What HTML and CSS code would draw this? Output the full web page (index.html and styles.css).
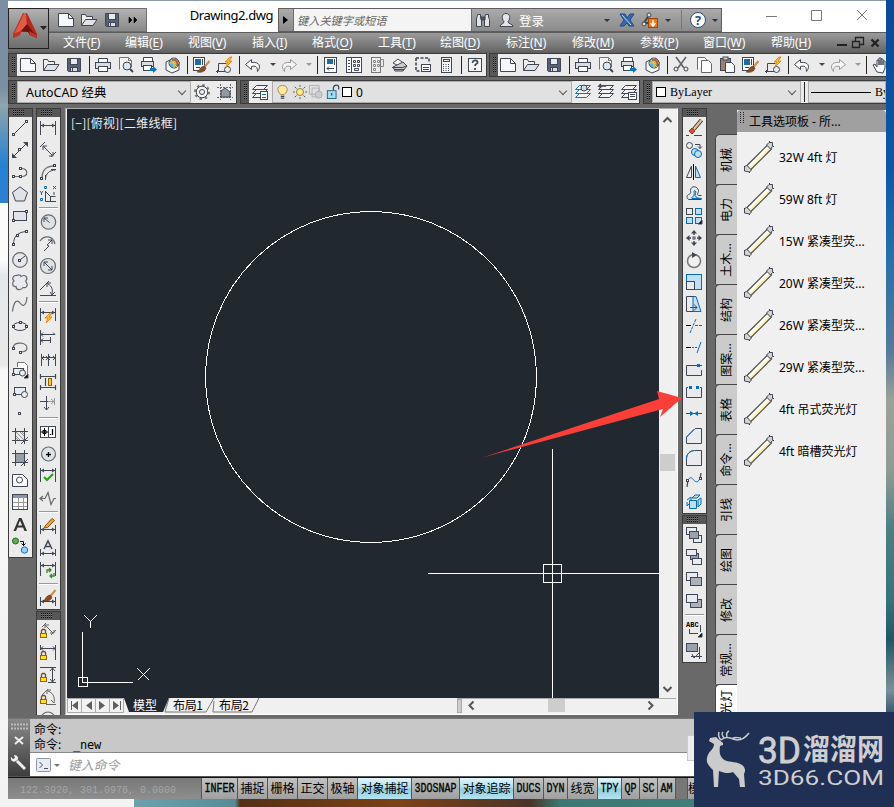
FILE: index.html
```html
<!DOCTYPE html>
<html lang="zh-CN">
<head>
<meta charset="utf-8">
<title>Drawing2.dwg</title>
<link rel="stylesheet" href="styles.css">
</head>
<body>
<div class="desk-left"></div><div class="desk-right"></div><div class="desk-bottom"></div>
<div class="window">
  <header class="header">
    <div class="titlebar">
      <div class="quick" data-icons="new open save more"></div>
      <div class="doc-title">Drawing2.dwg</div>
      <div class="info">
        <span class="info-arrow"></span>
        <div class="search">键入关键字或短语</div>
        <div class="info-tools"><span data-icons="binoc user"></span><span class="login">登录</span><i class="caret c1"></i><span class="xchg" data-icons="xlogo share"></span><i class="caret"></i><i class="line"></i><span class="help">?</span><i class="caret"></i></div>
      </div>
      <div class="controls">
        <svg width="104" height="14" fill="none" stroke="#777"><path d="M0 8.500h11M45.500 2.500h10v10h-10zM91 2l10 10M101 2l-10 10"/></svg>
      </div>
    </div>
    <nav class="menu">
      <span>文件(<u>F</u>)</span><span>编辑(<u>E</u>)</span><span>视图(<u>V</u>)</span><span>插入(<u>I</u>)</span><span>格式(<u>O</u>)</span><span>工具(<u>T</u>)</span><span>绘图(<u>D</u>)</span><span>标注(<u>N</u>)</span><span>修改(<u>M</u>)</span><span>参数(<u>P</u>)</span><span>窗口(<u>W</u>)</span><span>帮助(<u>H</u>)</span>
      <svg class="mdi" width="44" height="14" fill="none" stroke="#222"><path d="M0 9h10" stroke-width="2"/><path d="M15.500 5.500h7v6h-7zM18.500 5v-3.500h8v7h-4" stroke-width="1.300"/><path d="M34.500 3.500l7 7M41.500 3.500l-7 7" stroke-width="2.400"/></svg>
    </nav>
    <div class="app-button">
      <svg width="41" height="41"><path d="M14 4h4l10 21v4l-7-3-2-3h-7l-1 3-7 3v-4z" fill="#b6281f"/><path d="M15 4h2l1 14-9 6-4 1z" fill="#df5b46"/><path d="M18 15l6 8 4 3v3l-7-3-2-3-7-1z" fill="#71130f"/><path d="M4 25l8-3-1 4-7 3zM28 26l-8-4 1 4 7 3z" fill="#c43024"/><path d="M31 17h7l-3.500 4z" fill="#222"/></svg>
    </div>
  </header>

  <div class="toolrow">
    <div class="bar h first"><i class="grip"></i><div data-icons="new open save | print preview plot publish | match block | undo v redo w | props center palettes sheets markup calc | helpq"></div></div>
    <div class="bar h second"><i class="grip"></i><div data-icons="new open save | print preview plot publish | cut copy paste match block | undo v redo w | hand"></div></div>
  </div>
  <div class="toolrow row2">
    <div class="bar h ws"><i class="grip"></i><div class="combo">AutoCAD 经典<b></b></div><div data-icons="gear wsave"></div></div>
    <div class="bar h layers"><i class="grip"></i><div data-icons="layerprops"></div><div class="combo"><span data-icons="bulb sun freeze lock"></span><em></em>0<b></b></div><div data-icons="layers layerprev layerstate"></div></div>
    <div class="bar h bylayer"><i class="grip"></i><div class="combo"><em></em>ByLayer<b></b></div><i class="vline"></i><div class="combo type"><i></i>By</div></div>
  </div>

  <main class="main">
    <div class="dock"><div class="bar v"><i class="grip"></i><div data-icons="line xline pline polygon rect arc circle cloud spline ellipse earc insert mkblock point hatch gradient region table text addsel"></div></div></div>
    <div class="dock">
      <div class="bar v"><i class="grip"></i><div data-icons="dlin dalign darc dord | drad djog ddia dang | dquick dbase dcont dspace dbreak | tol cmark dinsp djogl | dedit dtedit dupd | dstyle"></div></div>
      <div class="bar v"><i class="grip"></i><div data-icons="lalign llin lvert lang lrad"></div></div>
    </div>
    <section class="drawing">
      <svg class="canvas" viewBox="67 109 592 589" width="592" height="589">
        <text x="71" y="128" class="view-label" textLength="106">[−][俯视][二维线框]</text>
        <g fill="none" stroke="#fff" shape-rendering="crispEdges">
          <circle cx="371" cy="377" r="165.500"/>
          <path d="M552.500 449v249M428 573.500h231M543.500 564.500h18v18h-18z"/>
          <path d="M82.500 632v50M82 682.500h51M78.500 677.500h9v9h-9zM84.500 615.500l6 6 6-6M90.500 621v7M137.500 668.500l12 12M149.500 668.500l-12 12"/>
        </g>
      </svg>
      <div class="vscroll"><svg width="16" height="12"><path d="M4.500 8l4-4 4 4"/></svg><i></i><svg width="16" height="12"><path d="M4.500 4l4 4 4-4"/></svg></div>
      <div class="bottom">
        <div class="layouts">
          <svg width="390" height="15"><path d="M.5.500h14v14h-14zM14.500.500h14v14h-14zM28.500.500h14v14h-14zM42.500.500h14v14h-14z" fill="#f2f2f2" stroke="#aaa"/><path d="M11 3v9l-6-4.500zM25 3v9l-6-4.500zM32 3v9l6-4.500zM46 3v9l6-4.500z" fill="#5f5f5f"/><path d="M4.500 3v9M53.500 3v9" stroke="#5f5f5f"/><path d="M57 0h45l-6 14H62z" fill="#212830"/><path d="M102 0l-4 14h41l8-14M147 3l-1 11h39l7-14" fill="none" stroke="#777"/><text x="66" y="12" fill="#fff">模型</text><text x="106" y="12" textLength="30">布局1</text><text x="152" y="12" textLength="30">布局2</text></svg>
        </div>
        <div class="hscroll"><i class="split"></i><svg width="12" height="15"><path d="M8.500 2.500l-4 4 4 4"/></svg><i class="thumb"></i><svg width="12" height="15"><path d="M4.500 2.500l4 4-4 4"/></svg></div>
      </div>
    </section>
    <div class="dock">
      <div class="bar v"><i class="grip"></i><div data-icons="erase mcopy mirror offset array move rotate scale stretch trim extend breakp break join chamfer fillet blend explode"></div></div>
      <div class="bar v"><i class="grip"></i><div data-icons="o1 o2 o3 o4 | abc hback"></div></div>
    </div>
    <aside class="palette">
      <div class="tabs"><span>机械</span><span>电力</span><span>土木...</span><span>结构</span><span>图案...</span><span>表格</span><span>命令...</span><span>引线</span><span>绘图</span><span>修改</span><span>常规...</span><span class="on">光灯</span></div>
      <div class="panel">
        <h2><i></i>工具选项板 - 所...</h2>
        <ul><li>32W 4ft 灯</li><li>59W 8ft 灯</li><li>15W 紧凑型荧...</li><li>20W 紧凑型荧...</li><li>26W 紧凑型荧...</li><li>29W 紧凑型荧...</li><li>4ft 吊式荧光灯</li><li>4ft 暗槽荧光灯</li></ul>
      </div>
    </aside>
  </main>

  <div class="command">
    <div class="cmd-side"><svg width="22" height="58" fill="none" stroke="#eee"><path d="M3 5.500h17M3 9.500h17" stroke="#bbb" stroke-width="2" stroke-dasharray="2 1"/><path d="M7 18l8 7M15 18l-8 7" stroke-width="2"/><path d="M9 42l8 8" stroke-width="3"/><path d="M6 36l1 3-2 1-2-2c-1 3 2 6 5 4 3-1 3-6-2-6z" fill="#eee" stroke="none"/></svg></div>
    <div class="cmd-body">
      <div class="history"><div>命令:</div><div>命令: <code>_new</code></div></div>
      <div class="prompt"><svg width="24" height="16"><rect x=".5" y="1.500" width="14" height="13" rx="1" fill="#e7edf3" stroke="#8c96a3"/><path d="M3.500 5l3 3-3 3M8 11.500h4" fill="none" stroke="#46505e"/><path d="M18 7h6l-3 3z" fill="#777"/></svg><span>键入命令</span></div>
    </div>
  </div>
  <footer class="status">
    <div class="coords">122.3920, 301.0976, 0.0000</div>
    <div class="modes"><span><b>INFER</b></span><span>捕捉</span><span>栅格</span><span>正交</span><span>极轴</span><span class="on">对象捕捉</span><span><b>3DOSNAP</b></span><span class="on">对象追踪</span><span><b>DUCS</b></span><span><b>DYN</b></span><span>线宽</span><span class="on"><b>TPY</b></span><span><b>QP</b></span><span><b>SC</b></span><span><b>AM</b></span><span class="gap"></span><span class="cut">模型</span></div>
  </footer>
</div>
<svg class="pointer" width="204" height="72"><path d="M1.500 69.500L182 21l-3 8 22-19-25-7 2 8z" fill="#fb3e38"/></svg>
<div class="ime"></div>
<div class="watermark">
  <svg width="200" height="95">
    <path d="M15 29l1-3 6-1 2 2 5 4 0 2-3 1c-1 6 0 10 3 13 5 4 14 2 19 6 3 2 4 6 2 9l1 13h-5l-1-8-6-7c-4 2-9 1-14-1l-1 16h-4l-1-17c-4-4-7-7-6-12 1-7 7-8 7-14z" fill="#cbcbcb"/>
    <path d="M27 28c6-5 10-1 16 0 6 0 9-3 12-7M27 28c-3-3-3-5-2-8M30 26c-3-4-2-5-1-6M33 25c-1-3 0-5 2-6M38 27c2-3 5-1 9-1" fill="none" stroke="#cbcbcb" stroke-width="1.500"/>
    <text x="64" y="51" class="wm-num big" font-size="37" textLength="43" lengthAdjust="spacingAndGlyphs">3D</text>
    <text x="109" y="48" font-size="29" font-weight="700" textLength="81" lengthAdjust="spacingAndGlyphs">溜溜网</text>
    <text x="64" y="73" class="wm-num" font-size="20.500" textLength="126" lengthAdjust="spacingAndGlyphs">3D66.COM</text>
  </svg>
</div>
<script src="icons.js"></script>
</body>
</html>
```
FILE: styles.css
```css
* { box-sizing: border-box; }
body { margin: 0; padding: 1px 8px 0; width: 894px; height: 807px; overflow: hidden; position: relative; background: #8b99a8; font: 12px "Noto Sans", "Noto Sans CJK SC", sans-serif; color: #000; }
i, em { font-style: normal; }
svg { display: block; flex: none; }
.desk-left { position: absolute; left: 0; top: 0; width: 8px; height: 807px; background: linear-gradient(#7b8ea3, #7b8ea3 88px, #8fa4ad 105px, #2482d2 165px, #2e7fd2 203px, #fbfbfb 203px, #fbfbfb 260px, #e4e7ea 275px, #e8e8e8 365px, #f8f8f8 370px, #f2f2f2); }
.desk-right { position: absolute; right: 0; top: 0; width: 8px; height: 720px; background: linear-gradient(#084a97, #0c58a6 170px, #2672aa 260px, #527a9a 350px, #9ba198 400px, #8f9b94 470px, #4a7f83 530px, #35747b 600px, #205767 640px, #789098 690px, #1c4967); }
.desk-bottom { position: absolute; left: 0; bottom: 0; width: 894px; height: 8px; background: linear-gradient(90deg, #f3f3f3 134px, #6ba1ad 134px, #558c97 235px, #553015 240px, #7d4117 400px, #4b3428 530px, #3d7773 560px, #478783); }
.window { position: relative; width: 878px; height: 798px; overflow: hidden; background: #696969; }

.header { position: relative; height: 52px; }
.titlebar { height: 31px; padding: 7px 0 0 41px; background: #fff; display: flex; }
.quick { width: 98px; height: 24px; padding: 0 0 0 6px; display: flex; align-items: center; background: linear-gradient(#b2b2b2, #8a8a8a); border: 1px solid #707070; border-left: 0; }
.doc-title { width: 131px; padding-right: 5px; text-align: right; font-size: 13px; line-height: 15px; letter-spacing: -.45px; }
.info { width: 444px; height: 24px; display: flex; background: linear-gradient(#aaa, #8b8b8b); border: 1px solid #5e5e5e; }
.info-arrow { flex: none; width: 14px; padding: 7px 0 0 4px; }
.info-arrow::before { content: ""; display: block; width: 5px; border: 4px solid transparent; border-left: 5px solid #000; border-right: 0; }
.search { flex: none; width: 179px; background: #f4f4f4; border: 1px solid #6d6d6d; border-width: 0 1px; padding-left: 3px; line-height: 23px; font-size: 11.2px; font-style: italic; color: #666; }
.info-tools { flex: 1; min-width: 0; display: flex; align-items: center; color: #fff; }
.info-tools [data-icons] { display: flex; }
.login { flex: none; width: 26px; white-space: nowrap; margin-left: 1px; font-size: 12.5px; }
.caret { flex: none; border: 3px solid transparent; border-top: 3px solid #333; border-bottom: 0; margin: 0 3px; }
.c1 { margin-left: 59px; }
.xchg { margin-left: 3px; }
.line { flex: none; width: 1px; height: 20px; background: #777; margin: 0 8px 0 7px; }
.help { flex: none; width: 16px; height: 16px; border-radius: 8px; background: #fff; border: 1px solid #334b78; color: #244b91; text-align: center; font: bold 13px/14px "Open Sans"; margin-right: 3px; }
.controls { flex: 1; padding: 0 0 0 44px; }
.menu { height: 21px; padding-left: 55px; display: grid; grid-template-columns: 62px 63px 64px 60px 66px 62px 66px 66px 68px 63px 68px 66px 1fr; align-items: center; background: linear-gradient(#9b9b9b, #6b6b6b 85%, #5e5e5e); border-top: 1px solid #5b5b5b; color: #fff; line-height: 20px; white-space: nowrap; }
.menu u { text-underline-offset: 2px; }
.app-button { position: absolute; left: 0; top: 7px; width: 41px; height: 41px; background: linear-gradient(#b1b1b1, #6e6e6e); border: 1px solid #222; }

.toolrow { height: 26px; display: flex; gap: 2px; background: #696969; }
.row2 { padding-top: 1px; gap: 3px; }
.bar { background: #ebebeb; border: 1px solid #3b3b3b; overflow: hidden; }
.bar.h { height: 24px; display: flex; }
.bar.h > div[data-icons] { display: flex; align-items: center; }
.grip { flex: none; position: relative; background: #575757; }
.grip::before { content: ""; display: block; background: repeating-linear-gradient(90deg, #575757 0 1px, transparent 1px 2px), repeating-linear-gradient(#111 0 1px, #777 1px 2px); }
.bar.h > .grip { width: 8px; padding: 3px 1px 0 2px; }
.bar.h > .grip::before { width: 5px; height: 15px; }
.bar.v > .grip { display: block; height: 8px; padding: 1px 0 0 3px; }
.bar.v > .grip::before { width: 13px; height: 5px; }
.slot { flex: none; display: flex; align-items: center; width: 23px; height: 22px; padding-left: 3px; }
.slot svg { width: 16px; height: 16px; overflow: visible; fill: none; stroke: #3f4754; }
.slot.drop { width: 13px; padding-left: 0; }
.sep { flex: none; width: 6px; height: 18px; border-right: 1px solid #252525; margin: 0 2px 0 -2px; }
.bar.v .slot { width: 23px; }
.bar.v .sep { display: block; width: 19px; height: 6px; border: 0; margin: 0 0 0 2px; background: linear-gradient(transparent 2px, #999 2px 3px, #fff 3px 4px, transparent 4px); }
.first { width: 479px; } .second { flex: 1; border-right: 0; }
.second > div[data-icons] { margin-left: -1px; }
.ws { width: 229px; } .layers { width: 400px; } .bylayer { flex: 1; border-right: 0; }
.combo { background: #e1e1e1; border: 1px solid #adadad; display: flex; align-items: center; padding-left: 8px; white-space: nowrap; flex: none; }
.combo b { margin: 0 5px 3px auto; width: 6px; height: 6px; border: solid #555; border-width: 0 1px 1px 0; transform: rotate(45deg); }
.combo em { width: 10px; height: 10px; border: 1px solid #000; background: #fff; margin-right: 4px; }
.ws .combo { width: 174px; font-size: 12.400px; }
.layers .combo { width: 300px; padding-left: 2px; }
.layers .combo span { display: flex; margin-right: 0; }
.layers .combo .slot { width: 16px; padding-left: 1px; margin-right: .5px; }
.layers .combo .slot svg { width: 14px; height: 14px; }
.layers .combo span + em { margin-left: 1px; }
.bylayer .combo { width: 149px; padding-left: 3px; font: 12px "Liberation Serif", serif; }
.vline { width: 1px; background: #222; margin: 1px 3px; }
.bylayer .type { flex: 1; min-width: 0; padding-left: 2px; overflow: hidden; }
.type i { width: 60px; height: 1px; background: #000; margin-right: 4px; flex: none; }

.main { height: 613px; padding-top: 3px; display: grid; grid-template-columns: 28px 29px 617px 33px 171px; background: #696969; }
.dock { width: 25px; height: 607px; display: flex; flex-direction: column; overflow: hidden; gap: 1px; }
.dock .bar { flex: none; }
.drawing { width: 613px; height: 607px; padding: 0 1px 0 1px; border: 1px solid #aaa; border-right-color: #fff; border-bottom-color: #fff; background: #f0f0f0; display: grid; grid-template: 589px 16px / 592px 17px; }
.canvas { background: #212830; }
.view-label { fill: #eee; font: 12px "Noto Sans CJK SC"; }
.vscroll, .hscroll { display: flex; background: #f0f0f0; }
.vscroll { flex-direction: column; padding: 5px 0 3px; }
.vscroll path, .hscroll path { fill: none; stroke: #555; stroke-width: 2; }
.vscroll i { height: 17px; width: 15px; background: #cdcdcd; margin: 328px 0 auto 1px; }
.bottom { grid-column: 1 / 3; display: flex; }
.layouts text { font: 12px "Noto Sans CJK SC"; }
.layouts { width: 390px; }
.hscroll { flex: 1; border-top: 1px solid #aaa; }
.split { width: 5px; height: 14px; background: #ccc; border: 1px solid #aaa; margin-right: 3px; }
.thumb { width: 17px; height: 13px; background: #cdcdcd; margin: 0 79px 0 71px; }

.palette { display: grid; grid-template-columns: 22px 149px; padding-top: 2px; height: 610px; overflow: hidden; }
.tabs { padding-top: 24px; }
.tabs span { display: block; width: 22px; height: 50px; border: 1px solid #444; border-width: 1px 0 0 1px; border-radius: 5px 0 0 0; background: #cbcbcb; writing-mode: sideways-lr; text-align: center; line-height: 21px; font-size: 12px; white-space: nowrap; }
.tabs .on { background: #fff; height: 31px; text-align: right; padding-top: 5px; overflow: visible; }
.panel { background: #f0f0f0; }
.panel h2 { margin: 0; height: 22px; padding-left: 3px; display: flex; align-items: center; font-size: 12px; font-weight: 400; background: #a0a0a0; border-radius: 4px 4px 0 0; }
.panel h2 i { width: 4px; height: 12px; margin: -6px 5px 0 0; background: repeating-linear-gradient(90deg, transparent 0 1px, #a0a0a0 1px 3px), repeating-linear-gradient(#222 0 1px, #a0a0a0 1px 2px); }
.panel ul { list-style: none; margin: 0; padding: 4px 0 0 7px; }
.panel li { height: 42px; display: flex; align-items: center; gap: 5px; white-space: nowrap; }

.command { height: 59px; border-top: 1px solid #777; border-bottom: 1px solid #555; display: flex; }
.cmd-side { width: 22px; background: linear-gradient(#898989, #3d3d3d); }
.cmd-body { flex: 1; }
.history { height: 34px; padding: 2px 0 0 4px; background: #c8c8c8; border-bottom: 1px solid #888; line-height: 15px; font-family: "Noto Sans CJK SC"; }
.history div { height: 15px; }
.history code { font: 12px/12px "DejaVu Sans Mono"; letter-spacing: -.2px; margin-left: 9px; }
.prompt { height: 23px; background: #fff; display: flex; align-items: center; padding-left: 6px; gap: 8px; color: #999; font-style: italic; font-size: 12.800px; }
.status { height: 22px; display: flex; background: #777; border-top: 1px solid #111; }
.coords { width: 193px; padding: 2px 0 0 12px; background: linear-gradient(#777, #8e8e8e); color: #a5a5a5; font: 10px/21px "Liberation Mono"; white-space: pre; }
.modes { display: grid; grid-template-columns: 36px 30px 30px 30px 30px 54px 48px 54px 30px 24px 30px 24px 18px 18px 18px 12px 60px; }
.modes span { border-left: 1px solid #555; line-height: 22px; text-align: center; white-space: nowrap; overflow: hidden; background: linear-gradient(#c3c3c3, #9f9f9f); font-size: 12px; letter-spacing: -.1px; }
.modes .on { background: linear-gradient(#e2f6fb, #a7dcea 48%, #8fcbdc 52%, #b6e3ef); }
.modes b { display: block; font: 400 10px/22px "Liberation Mono"; letter-spacing: 0; margin: 0 -3px; transform: scaleY(1.25); -webkit-text-stroke: .25px #000; }
.modes .gap { background: #777; }
.modes .cut { text-align: left; }

.pointer { position: absolute; left: 481px; top: 388px; }
.ime { position: absolute; left: 687px; top: 735px; width: 20px; height: 26px; background: #eee; border: 1px solid #ccc; }
.watermark { position: absolute; left: 694px; top: 712px; width: 200px; height: 95px; background: #203055; }
.watermark text { fill: #cfcfcf; font-family: "Noto Sans CJK SC"; }
.watermark .wm-num { font-family: Roboto, sans-serif; }
.watermark .big { stroke: #cfcfcf; stroke-width: .8; }
```
FILE: icons.js
```js
// Toolbar glyphs on a 16 x 16 grid; strokes inherit the slot colour.
const p = (d, a = '') => `<path d="${d}" ${a}/>`;
const n = (...c) => { let s = ''; for (let k = 0; k < c.length; k += 2) s += `<rect x="${c[k] - 1}" y="${c[k + 1] - 1}" width="2" height="2" fill="#fff"/>`; return s; };
const r = (x, y, w, h, f = '#e8ebf0', a = '') => `<rect x="${x}" y="${y}" width="${w}" height="${h}" fill="${f}" ${a}/>`;
const c = (x, y, q, f = 'none', a = '') => `<circle cx="${x}" cy="${y}" r="${q}" fill="${f}" ${a}/>`;
const blue = 'stroke="#0869bd"', lb = '#bfe0f2', dark = 'fill="#3f4754" stroke="none"', grey = 'stroke="#666b70" stroke-width="1.2"';
// Horizontal dimension: line at y, extension lines from a to b.
const dim = (y, a, b) => p(`M.5 ${a}V${b}M15.500 ${a}V${b}M1 ${y}h14`) + p(`M4 ${y - 2}l-3 2 3 2zM12 ${y - 2}l3 2-3 2z`, dark);
const dimLow = () => dim(11.5, 7, 16);
const lock = r(.5, 10.500, 6, 4, '#ffe11c', 'stroke="#9a6200"') + p('M1.500 10V7.500l1-1h2l1 1V10', 'stroke="#784b20" stroke-width="1.300"');
const paper = p('M.5 1.500h10l5 5v8H.5z', 'fill="#f6f7f9"') + p('M10.500 1.500v5h5');
const printer = p('M3.500 6V1.500h9V6', 'fill="#fff"') + r(.5, 5.5, 15, 6, '#d9dce1') + r(3.500, 9.500, 9, 5, '#fff');
const stack = (k = '#3f4754') => [4, 8, 12].map(y => p(`M4.500 ${y - 2.5}h11l-4 4h-11z`, `fill="#f4f4f4" stroke="${k}"`)).join('');
const flash = (x, y) => `<path d="M${x + 5} ${y}l-5 5h3l-2 5 6-6h-3l3-4z" fill="#ffc01a" stroke="#e07b00" stroke-width=".8"/>`;
const brush = p('M15.500 0l-5 6', 'stroke="#c98d4c" stroke-width="2"') + p('M10 5l2 2c-1 4-5 5-9 4 3-1 2-5 7-6z', 'fill="#8b4d22" stroke="#4e2d18" stroke-width=".5"');
const crop = p('M3.500 0v16M0 3.500h16M12.500 0v16M0 12.500h16');
const I = {
  new: paper,
  open: p('M.5 13.500v-11h4l1 2h6v3', 'fill="#eee"') + p('M.5 13.500l4-6h11.500l-4 6z', 'fill="#dfe3e8"'),
  save: p('M1.500 1.500h13v13h-12l-1-1z', 'fill="#596177"') + r(4.500, 1.500, 7, 6, '#e8ebee') + r(4.500, 10.500, 7, 4, '#ddd') + p('M6.500 11v3'),
  more: p('M2 5v6l3-3zM7 5v6l3-3z', 'fill="#000" stroke="#000" stroke-width=".6"'),
  binoc: p('M2.500 2.500h3v3l1 2v7h-5V7zM10.500 2.500h3v3l1 2v7h-5V7z', 'fill="#e3e3e3"') + p('M6 5h4v3H6z', 'fill="#555"'),
  user: p('M2 14.500c0-3 4-2 4-5-3-3-2-8 2-8s5 5 2 8c0 3 5 2 5 5z', 'fill="#e6e6e6"'),
  xlogo: p('M1 2h5l2 4 3-4h4l-4 6 4 6h-5l-2-3-3 3H1l4-6z', 'fill="#3668ad" stroke="#204b8c"') + p('M3 3l9 10', 'stroke="#b9d4f2"'),
  share: p('M7 3L2 11h7', 'stroke-width="2"') + c(7, 3, 2, '#ddd') + c(2, 12, 2, '#ddd') + r(6.500, 6.500, 9, 9, '#ee7619', 'stroke="#a34500"') + p('M11 8v5M8.5 11l2.500 3 2.500-3', 'stroke="#fff" stroke-width="1.500"'),
  print: printer,
  preview: p('M1.500 12.500v-12h9l3 3v7M10.500.5v3h3', 'fill="#f8f8f8" stroke="#777"') + c(9, 9, 4, '#d5e9f3') + p('M12 12l3 3', 'stroke-width="2"'),
  plot: p('M2.500 5V.5h9V5', 'fill="#fff"') + r(.5, 4.500, 12, 5, '#d9dce1') + r(2.500, 8.500, 8, 5, '#fff') + p('M9 11h3V9l4 3.500-4 3.500v-2H9z', 'fill="#0872c6" stroke="none"'),
  publish: p('M2 5l6-3 7 3v8l-7 3-6-3z', 'fill="#f4f4f4"') + c(10, 6, 5, '#58b9cf') + p('M10 1v10M5 6h10M7 3l6 7', 'stroke="#ffc52b"') + p('M8 3c5-1 6 3 5 6', 'stroke="#dc4027" stroke-width="1.500"'),
  match: r(.5, .5, 11, 13, '#fff') + r(2, 2, 6, 6, '#1b6daa', 'stroke="none"') + p('M3 10.500h4M9.500 2v6') + `<g transform="translate(1 4)">${brush}</g>`,
  block: p('M10.500 6.500h-8v8M0 14.500h9M1.500 13v3') + c(11.500, 12.500, 3, '#eee') + flash(9, 0),
  undo: p('M6.500 2.500l-6 5 6 5v-3c4-1 6 0 6 5 4-5 2-10-6-9z', 'fill="#fafafa"'),
  redo: p('M9.500 2.500l6 5-6 5v-3c-4-1-6 0-6 5-4-5-2-10 6-9z', 'stroke="#999" fill="#f5f5f5"'),
  v: p('M5 6h6l-3 3z', dark), w: p('M5 6h6l-3 3z', 'fill="#999" stroke="none"'),
  props: r(1.500, .5, 12, 15, '#fff') + r(4, 2, 6, 5, '#1b6daa', 'stroke="none"') + p('M4 11.5h7M4 11.5l2-2M4 11.5l2 2M11.500 2v6'),
  center: r(.5, .5, 15, 15, '#fff') + p('M5.500 1v14M2 3.500h2M2 6.500h2M2 9.500h2M2 12.500h2M7.500 3.500h2v2h-2zM11.500 3.500h2v2h-2zM7.500 7.500h2v2h-2zM11.500 7.500h2v2h-2zM8.500 11.5h4v2h-4z'),
  palettes: r(2.500, .5, 9, 15, '#eee', 'stroke="#777"') + p('M11.500 2.500h3v7h-3M4.500 3.500h2v2h-2zM8.500 3.500h2v2h-2zM4.500 7.500h2v2h-2zM8.500 7.500h2v2h-2zM4.500 11.500h2v2h-2z', 'stroke="#888"'),
  sheets: p('M1 6l5-4 8 6-3 3z', 'fill="#fff"') + p('M1 10l10-5 4 4-4 5H3z', 'fill="#ccc"') + p('M0 10.500h11l4-2M2 12.500h10'),
  markup: p('M1 1h13v5M1 1v13h5', 'stroke-width="1.600" stroke-dasharray="3 1.500"') + r(6.500, 7.500, 9, 7, '#fff') + p('M8 10.500h6M8 12.500h6'),
  calc: r(3.500, .5, 10, 15, '#f6f6f6') + r(5.500, 2.500, 6, 2) + [7.5, 9.5, 11.5, 13.5].map(y => p(`M5 ${y}h7`, 'stroke-dasharray="1 1.500"')).join(''),
  helpq: r(1.500, 1.500, 13, 13, '#f7f7f7') + p('M5.500 6c0-4 6-3 5 0-1 1-2.500 1-2.500 3M8 11v2', 'stroke-width="1.700"'),
  cut: p('M3 0l8 11M13 0L5 11', 'stroke-width="1.600" stroke="#666"') + c(3, 12, 2) + c(13, 12, 2),
  copy: p('M1.500 12.500v-12h7l3 3M5.500 3.500h7l3 3v9h-10z', 'fill="#fff" stroke="#666"'),
  paste: r(1.500, 1.500, 10, 12, '#a08068') + r(4, 0, 5, 3, '#ccc') + p('M6.500 5.500h6l3 3v7h-9z', 'fill="#fff"'),
  hand: p('M5 15L1 8l2-1 2 3V3h2v5-7h2v7-6h2v6-4h2v7l-2 5z', 'fill="#fff"'),
  gear: c(8, 8, 7, 'none', 'stroke-width="2" stroke="#777" stroke-dasharray="2.500 3"') + c(8, 8, 5.800, '#f4f4f4') + c(8, 8, 2.500),
  wsave: p('M0 3.500h16M0 13.500h16M3.500 0v16M13.500 0v16', 'stroke-dasharray="2 1" stroke="#666"') + p('M4 13V7l4-3 5 4v5z', 'fill="#929aa5"'),
  layerprops: stack() + r(8.500, 7.500, 7, 8, '#fff') + p('M10 10.500h4M10 13.5h4', blue),
  bulb: p('M5.500 11c-6-6-3-10.500 2-10.500s8 5 2 10.500z', 'fill="#ffe9a0" stroke="#9c8240"') + p('M5.500 13h4M5.500 15h4', 'stroke-width="1.300"'),
  sun: c(8, 8, 4, '#ffe78a', 'stroke="#8b7130"') + p('M8 0v2M8 14v2M0 8h2M14 8h2M2 2l2 2M12 12l2 2M14 2l-2 2M4 12l-2 2'),
  freeze: p('M.5.500h11v10H.5zM3.500 3.500h8v10h-8z', 'stroke="#aaa"') + c(11, 11, 4, '#ccc', 'stroke="#aaa"'),
  lock: r(1.500, 6.500, 10, 9, '#a5def2', 'stroke="#165f82"') + p('M8.500 6V2.500c1-3 6-3 6 0V5M6.500 9v3', 'stroke-width="1.400"'),
  layers: stack('#1670b9') + c(9, 4, 3, '#c7dbea'), layerprev: stack() + p('M8 2H1l2-2M1 2l2 2', 'stroke-width="1.500"'),
  layerstate: stack() + r(7.500, 8.500, 8, 7, '#fff') + p('M9 10.500h5M9 12.500h5'),
  line: p('M1 15L15 1') + n(1.500, 14.500, 14.500, 1.500),
  xline: p('M1 15L15 1') + p('M0 11v5h5zM11 0h5v5z', dark) + n(7.500, 7.500),
  pline: p('M1.500 12.500h8c7 0 7-8 0-8', grey) + n(1.500, 12.500, 8.500, 12.500, 8.500, 4.500),
  polygon: p('M8 .8l7.500 5.700-3 8.500h-9L.5 6.500z', 'fill="#dfe2e7"'),
  rect: r(1.500, 3.500, 13, 9, '#dfe2e7') + n(1.500, 12.500, 14.500, 3.500), arc: p('M1.500 14.500C1.500 6 6 2 14.500 1.500') + n(1.500, 14.500, 5.500, 5.500, 14.500, 1.500),
  circle: c(8, 8, 7.300, '#e5e7ea', grey) + p('M8 8l5-4') + n(7.500, 8.500),
  cloud: p('M5 1.500c3-2 4 1 4 1 5-3 7 2 5 4-1 1 0 1 1 3s-1 5-4 4c-2 3-7 3-7-1C0 13 0 8 2 7-1 4 2 1 5 1.500z', 'fill="#e8eaed" ' + grey), spline: p('M.5 15.500C2 3 6 4 8 7s6 5 7-6', grey),
  ellipse: `<ellipse cx="8" cy="8.500" rx="7" ry="4"/>` + n(1.500, 8.500, 14.500, 8.500, 8.500, 4.500), earc: p('M1 8c1-7 14-6 14 0 0 3-4 4-7 4', grey) + n(1.500, 8.500, 8.500, 12.500),
  insert: p('M5.500 5V.500h7l3 3V12', 'fill="#fff" stroke="#777"') + r(1.500, 6.500, 10, 6) + c(10.5, 11, 3, '#eee') + p('M16 12v4h-4z', 'fill="#000"') + n(1.500, 12.500),
  mkblock: r(2.500, 3.500, 11, 7) + c(12.5, 10.5, 3, '#eee') + n(2.500, 10.500), point: n(7.500, 7.500),
  hatch: crop + p('M4 4l8 8M4 8l4 4M8 4l4 4M4 10l2 2M10 4l2 2', 'stroke="#777" stroke-width=".8"') + p('M16 9l-7 7', 'stroke="#555"'), gradient: crop + r(4, 4, 8, 8, '#989da5', 'stroke="none"') + p('M16 9l-7 7'),
  region: p('M.5 2.500h10l5 5v7H.5z', 'fill="#fff"') + c(7.500, 8, 3), table: r(.5, .5, 15, 15, '#fff') + r(1, 1, 14, 3, '#8796aa', 'stroke="none"') + p('M1 8.500h14M1 12.500h14M6.500 4v11M11.500 4v11', 'stroke="#999"'),
  text: p('M1.500 15L7 2h2.500L15 15h-2.500l-1.500-3.500H5.500L4 15zM6 9.500h4.200L8 4.500z', 'fill="#333" stroke="none" fill-rule="evenodd"'),
  addsel: c(3.500, 3, 3, '#69a95f', 'stroke="#216c22"') + c(12.500, 12, 3.200, '#96d1f3', 'stroke="#1376b7"') + p('M8 3.500h3.500v4M9.500 5.500l2 2 2-2', 'stroke="#000"'),
  dlin: dim(5.5, 1, 15), dalign: p('M3 4l10 10M0 5l5-5M11 15l5-5M3 8V4h4M9 14h4v-4'), darc: p('M2 14C2 6 7 2 14 2', 'stroke="#777" stroke-width="1.500"') + p('M5.5 15c0-5 4-9 10-9M5.500 11v5M11 5.500h5') + n(1.500, 14.500, 14.500, 1.500),
  dord: p('M5.500 5v10.500H16M5.500 5.500l5 5h5M10.500 10v6M14 6v3') + p('M0 5l1.500 2L3 5M1.500 7v2M.5 12.500h2v2h-2zM4.500.5h2v2h-2zM13 0l3 3M16 0l-3 3', blue),
  drad: c(8.500, 8, 7.200, '#dfe2e4', grey) + p('M9.500 8.500L4 4M4 8V4h4'), djog: p('M0 5C4-1 13-1 15 8', grey) + p('M4 15l5-5-2-1 5-5M8 4h4v4'), ddia: c(8, 8, 7.500, '#dfe2e4', grey) + p('M4 4l8 8M4 8V4h4M8 12h4V8'), dang: p('M0 15.500h16M0 10l9-9M8 4c4 2 5 6 4 10M7 7V3h4M10 12l2 3 3-3'),
  dquick: dim(4.5, 0, 13) + flash(5, 5), dbase: p('M.5 0v15M1 4.500h14M1 10.500h10M10.500 7v6M3 2.500l-2 2 2 2M3 8.500l-2 2 2 2M13 2.500l2 2'), dcont: p('M1.500 2v12M8.500 2v12M15.500 2v12M2 5.500h13M4 4l-2 2 2 2M10 4l-2 2 2 2M6 4l2 2-2 2M13 4l2 2-2 2'),
  dspace: p('M0 2.500h16M0 13.500h16M.5 0v5M15.500 0v5M.5 11v5M15.500 11v5M5.500 4v8', 'stroke-width="1.200"') + r(8.500, 4.500, 3, 7, '#ffc928', 'stroke="#936000"'), dbreak: p('M6.500 0v14M4 11l2.500 3 2.500-3M0 5.500h8') + p('M14.500 2v7M8 5.500h6M11 3l3 2.500L11 8', 'stroke="#999"'),
  tol: r(.5, 2.500, 15, 11, '#fff') + p('M8.500 3v10') + p('M4.500 4v8M1 8h7M3 6.500h3v3H3z', 'stroke="#000"') + p('M10.500 10v1M12.500 5v6', 'stroke="#000" stroke-width="1.300"'), cmark: c(8.500, 8, 7, '#dfe2e4', grey) + p('M6 8.500h5M8.500 6v5', 'stroke="#000" stroke-width="1.300"'),
  dinsp: dim(2.5, 0, 14) + p('M4 9l3 3 6-6', 'stroke="#25a617" stroke-width="2.200"'), djogl: p('M0 8.500h5l3-6 3 12 3-6h2M3 6L0 8.500 3 11', grey),
  dedit: dimLow() + p('M5 8l7-7.500 2.500 2-7 7-3 .5z', 'fill="#f5a52e" stroke="#81501c"'), dtedit: dim(13.5, 9, 16) + p('M4 9l4-8 4 8M6 6.5h4', 'stroke-width="1.500"'), dupd: dim(3.5, 0, 14) + p('M7 11v-3h4M14 11v3h-4M9 6l2 2-2 2M12 12l-2 2 2 2', 'stroke="#378a23" stroke-width="1.300"'), dstyle: dimLow() + brush,
  lalign: lock + p('M5 2l8 8M2 4l4-4M11 12l5-5M5 5V2h4M10 10h4V7', 'stroke="#666"'), llin: lock + p('M.5 0v5M15.500 0v15M1 3.500h14M3 1.500l-2 2 2 2M13 1.500l2 2-2 2'), lvert: lock + p('M0 .500h16M8 15.500h8M12.500 1v14M10 4l2.500-3L15 4M10 12l2.500 3 2.500-3'), lang: lock + p('M6 15.500h10M2 6l6-6M8 2c6 2 7 8 6 12M7 5V1h4M11 11l3 3', 'stroke="#666"'), lrad: c(8, 8, 7, 'none', grey),
  erase: p('M15.500 0L8 9', 'stroke="#3f3027" stroke-width="4"') + p('M15.500 0L8 9', 'stroke="#e2c29a" stroke-width="2.200"') + p('M6 8l3 3-3 3-3-3z', 'fill="#d95526" stroke="#83371e"') + p('M0 15.500h3M8 15.500h8'), mcopy: c(3.500, 3.500, 3, '#eee') + p('M9 2.500h5v4M12 4.500l2 2 2-2') + c(9, 10, 3.500, lb, blue) + c(12, 12, 3.500, lb, blue),
  mirror: p('M5.500 2v11.500H.5z', 'fill="#eee"') + p('M7.500 0v16', 'stroke="#000"') + p('M9.500 2v11.500h5z', `fill="${lb}" ${blue}`), offset: p('M15.500 9.500h-3c-2-1 0-3 0-5-1-5-8-5-8 0 0 2 1 3-2 4-2 1-2 3 0 5h13', '') + p('M15.500 12.500H6c-1-1 1-2 2-3 1-3-1-4 .5-5 2 0 1 3 .5 5 1 2 3 3 6.500 3', `fill="${lb}" ${blue}`),
  array: r(.5, .5, 6, 6) + r(9.500, .5, 6, 6, lb, blue) + r(.5, 9.500, 6, 6, lb, blue) + r(9.500, 9.500, 6, 6, lb, blue) + p('M16 12v4h-4z', 'fill="#000"'), move: p('M8 1v4M8 11v4M1 8h4M11 8h4', 'stroke-width="1.400"') + p('M5 3.500l3-3.500 3 3.500zM5 12.500l3 3.500 3-3.500zM3.500 5L0 8l3.500 3zM12.500 5L16 8l-3.500 3z', dark) + n(8, 8),
  rotate: c(8, 9, 6.500, '#f0f0f0', 'stroke="#777" stroke-width="1.500"') + p('M6 0l5 3-5 3z', dark), scale: r(.5, .5, 15, 15, lb, blue) + r(.5, 7.500, 8, 8), stretch: p('M7 .500h3l5 15H7z', `fill="${lb}" ${blue}`) + p('M8 .500H.5v15h7M4 11.5h7M8 8.5l3 3-3 3'),
  trim: p('M0 7.500h5', 'stroke="#000"') + p('M4 15L10 1M9 7.500h7', `${blue} stroke-dasharray="3 1"`), extend: p('M0 7.500h5', 'stroke="#000"') + p('M6 7.500h5', `${blue} stroke-dasharray="2 1"`) + p('M11 13l4-11', blue), breakp: p('M16 3.500H.5v10h15V8', 'fill="#e7e9ed"') + r(11, 2, 3, 3, '#0869bd', 'stroke="none"'), break: p('M2 3.500H.5v10h15v-10H14', 'fill="#e7e9ed"') + r(3, 2, 3, 3, '#0869bd', 'stroke="none"') + r(10, 2, 3, 3, '#0869bd', 'stroke="none"'),
  join: p('M0 7.500h16') + p('M4 5l4 2.500L4 10zM12 5L8 7.500l4 2.500z', 'fill="#0869bd" stroke="none"'), chamfer: p('M9 .5h6.500v15H.5V9l8-8', 'fill="#e9ebef"') + p('M.5 9l8-8', blue), fillet: p('M9 .5h6.500v15H.5V9c0-5 3-8 8-8.500', 'fill="#e9ebef"') + p('M.5 9c0-5 3-8 8-8.500', blue), blend: p('M1 15l1-7M14 7l1-6', 'stroke-width="1.300"') + p('M2 8c5-8 6 8 12-1', blue) + n(1.500, 8.5, 14.500, 6.5),
  explode: p('M3.500 6.500h7v8h-7zM1 6l4-3v3M1 8v4l2-2M6 4l3-3h5l-3 3zM12 6l3-2v6l-3 3z', `fill="${lb}" ${blue}`), o1: r(.5, .5, 10, 7) + r(7.500, 8.500, 8, 7) + r(3.500, 4.500, 9, 7, '#9ba1aa'), o2: r(4.500, 4.500, 8, 6, '#8fa3b0') + r(.5, .5, 10, 6) + r(6.500, 9.500, 9, 6), o3: r(.5, 1.500, 11, 8) + r(4.500, 6.500, 11, 8, '#adb2ba'), o4: r(4.500, 6.500, 11, 8, '#adb2ba') + r(.5, 1.500, 11, 8),
  abc: `<text x="0" y="6" font-family="Liberation Mono" font-size="7" font-weight="700" fill="#000" stroke="none">ABC</text>` + p('M4 12.500h8M3.500 8v5M14.500 4v7') + p('M16 12v4h-4z', 'fill="#000"'), hback: r(.5, .5, 11, 8, '#9ba1aa') + p('M5 13.500h11M13.500 4v12M6 11l2 4 5-5'),
};
document.querySelectorAll('[data-icons]').forEach(el => {
  el.innerHTML = el.dataset.icons.split(' ').map(k => k === '|' ? '<i class="sep"></i>'
    : `<span class="slot${k === 'v' || k === 'w' ? ' drop' : ''}"><svg viewBox="0 0 16 16">${I[k]}</svg></span>`).join('');
});
const tube = '<svg width="30" height="32" viewBox="0 0 30 32"><path d="M2.500 25L23.500 4l4 4L6.500 29z" fill="#fff0b5" stroke="#444a55" stroke-width="1.200"/><path d="M5 25.500L24.500 6" stroke="#fff" stroke-width="1.800"/><path d="M2.500 24l5 5-2 2-5-1 0-4zM22.500 4l2.500-2.500 3.500 0 0 4-2 2.500z" fill="#d3d3d8" stroke="#444a55"/><path d="M1 26l-1-1M5 31l1 1M26 1l-1-1M29 5l1 1" stroke="#333"/></svg>';
document.querySelectorAll('.panel li').forEach(li => li.insertAdjacentHTML('afterbegin', tube));
```
